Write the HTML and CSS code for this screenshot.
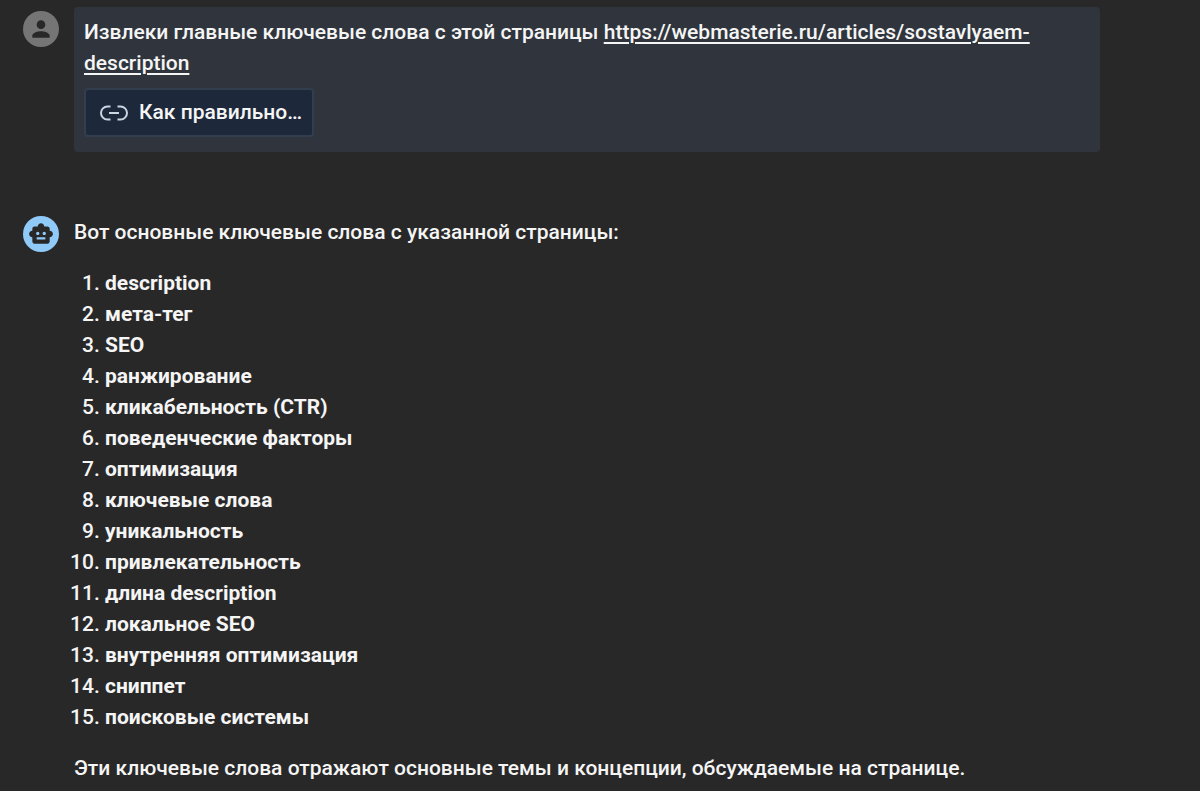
FILE: index.html
```html
<!DOCTYPE html>
<html lang="ru">

<head>
<meta charset="utf-8">
<title>Ключевые слова</title>
<link rel="stylesheet" href="styles.css">
</head>

<body>
  <main class="chat">

    <div class="message">
      <div class="avatar user">
        <svg viewBox="0 0 24 24"><path d="M12 12a4 4 0 1 0 0-8 4 4 0 0 0 0 8zm0 2c-2.700 0-8 1.300-8 4v2h16v-2c0-2.700-5.300-4-8-4z"/></svg>
      </div>
      <div class="bubble">
        <p>Извлеки главные ключевые слова с этой страницы <a href="https://webmasterie.ru/articles/sostavlyaem-description">https://webmasterie.ru/articles/sostavlyaem-description</a></p>
        <button type="button" class="source">
          <svg viewBox="0 0 28 16"><path d="M10.500 1.500H7.500a6.500 6.500 0 0 0 0 13h3M17.500 1.500h3a6.500 6.500 0 0 1 0 13h-3M9 8h10"/></svg>
          <span>Как правильно…</span>
        </button>
      </div>
    </div>

    <div class="message">
      <div class="avatar bot">
        <svg viewBox="0 0 24 24"><path d="M20 9V7c0-1.100-.9-2-2-2h-3c0-1.660-1.340-3-3-3S9 3.340 9 5H6c-1.100 0-2 .9-2 2v2c-1.660 0-3 1.340-3 3s1.340 3 3 3v4c0 1.100.9 2 2 2h12c1.100 0 2-.9 2-2v-4c1.660 0 3-1.340 3-3s-1.340-3-3-3zM7.500 11.500c0-.83.67-1.500 1.500-1.500s1.500.67 1.500 1.500S9.830 13 9 13s-1.500-.67-1.500-1.500zM16 17H8v-2h8v2zm-1-4c-.83 0-1.500-.67-1.500-1.500S14.170 10 15 10s1.500.67 1.500 1.500S15.830 13 15 13z"/></svg>
      </div>
      <div class="answer">
        <p>Вот основные ключевые слова с указанной страницы:</p>
        <ol>
          <li><b>description</b></li>
          <li><b>мета-тег</b></li>
          <li><b>SEO</b></li>
          <li><b>ранжирование</b></li>
          <li><b>кликабельность (CTR)</b></li>
          <li><b>поведенческие факторы</b></li>
          <li><b>оптимизация</b></li>
          <li><b>ключевые слова</b></li>
          <li><b>уникальность</b></li>
          <li><b>привлекательность</b></li>
          <li><b>длина description</b></li>
          <li><b>локальное SEO</b></li>
          <li><b>внутренняя оптимизация</b></li>
          <li><b>сниппет</b></li>
          <li><b>поисковые системы</b></li>
        </ol>
        <p>Эти ключевые слова отражают основные темы и концепции, обсуждаемые на странице.</p>
      </div>
    </div>

  </main>
</body>

</html>
```

FILE: styles.css
```css
body { margin: 0; background: #282828; color: #f5f5f5;
       font: 500 21px/31px Roboto, sans-serif; }
p    { margin: 0; }
a    { color: inherit; text-underline-offset: 3px; }

.chat    { display: flex; flex-direction: column; gap: 64px;
           padding: 7px 100px 0 23px; }
.message { display: flex; align-items: flex-start; gap: 15px; }

.avatar     { display: flex; flex: none; align-items: center;
              justify-content: center; width: 36px; height: 36px;
              margin-top: 4px; border-radius: 50%; }
.avatar svg { width: 26px; height: 26px; fill: #282828; }
.user       { background: #757575; }
.bot        { margin-top: 0; background: #90caf9; }

.bubble { flex: 1; padding: 10px 10px 15px; border-radius: 4px;
          background: #30353d; }

.source     { display: flex; align-items: center; gap: 11px; height: 49px;
              margin-top: 9px; padding: 0 10px 0 14px;
              border: 2px solid #323e4e; border-radius: 4px;
              background: #1e283b; color: #f5f5f5; font: inherit; }
.source svg { width: 28px; height: 16px; fill: none; stroke: #cbd5e1;
              stroke-width: 2; }

.answer    { flex: 1; padding-top: 1px; }
.answer ol { margin: 20px 0; padding-left: 31px; }
```
